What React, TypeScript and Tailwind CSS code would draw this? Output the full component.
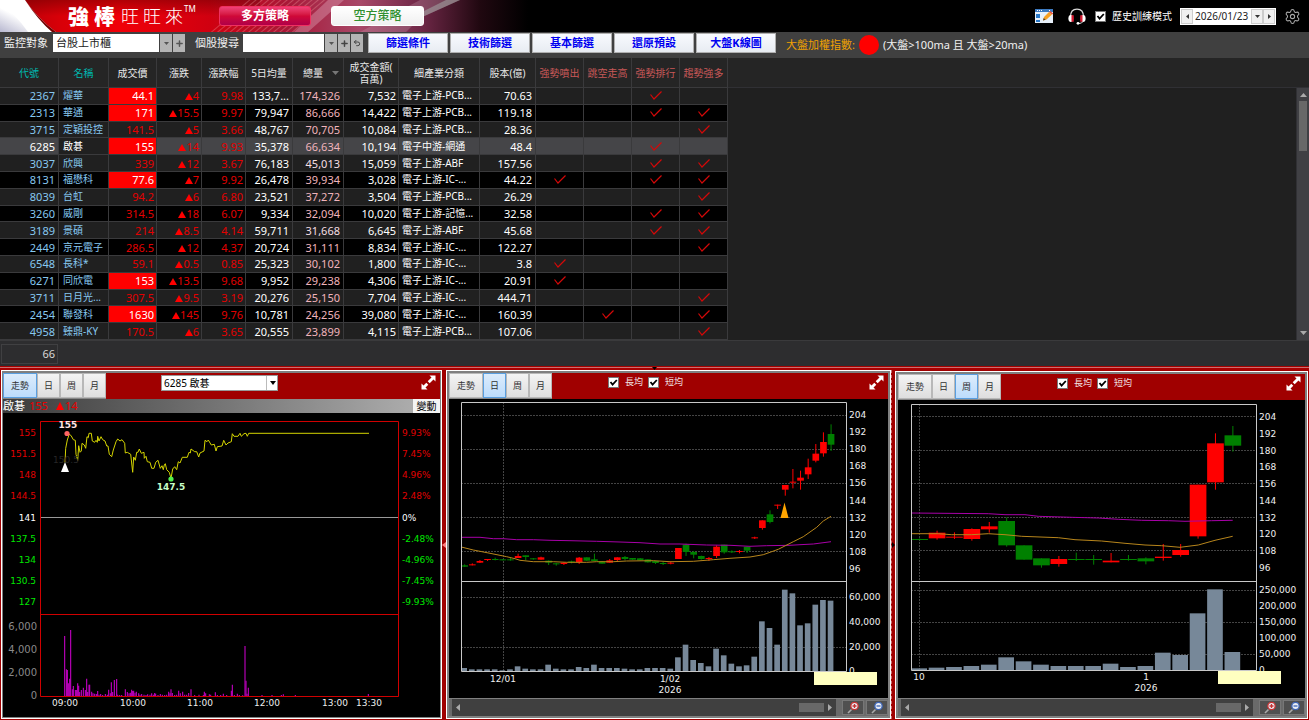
import React from "react";
import { Plus, Settings, Undo2 } from "lucide-react";

type Row = {
  code: string;
  name: string;
  price: string;
  limit?: boolean;
  change: string;
  pct: string;
  avg: string;
  vol: string;
  amount: string;
  sector: string;
  capital: string;
  marks: number[];
};

const row = (
  code: string, name: string, price: string, limit: boolean, change: string, pct: string,
  avg: string, vol: string, amount: string, sector: string, capital: string, marks: number[],
): Row => ({ code, name, price, limit, change, pct, avg, vol, amount, sector, capital, marks });

const rows: Row[] = [
  row("2367", "燿華", "44.1", true, "4", "9.98", "133,7...", "174,326", "7,532", "電子上游-PCB...", "70.63", [2]),
  row("2313", "華通", "171", true, "15.5", "9.97", "79,947", "86,666", "14,422", "電子上游-PCB...", "119.18", [2, 3]),
  row("3715", "定穎投控", "141.5", false, "5", "3.66", "48,767", "70,705", "10,084", "電子上游-PCB...", "28.36", [3]),
  row("6285", "啟碁", "155", true, "14", "9.93", "35,378", "66,634", "10,194", "電子中游-網通", "48.4", [2]),
  row("3037", "欣興", "339", false, "12", "3.67", "76,183", "45,013", "15,059", "電子上游-ABF", "157.56", [2, 3]),
  row("8131", "福懋科", "77.6", true, "7", "9.92", "26,478", "39,934", "3,028", "電子上游-IC-...", "44.22", [0, 2, 3]),
  row("8039", "台虹", "94.2", false, "6", "6.80", "23,521", "37,272", "3,504", "電子上游-PCB...", "26.29", [3]),
  row("3260", "威剛", "314.5", false, "18", "6.07", "9,334", "32,094", "10,020", "電子上游-記憶...", "32.58", [2, 3]),
  row("3189", "景碩", "214", false, "8.5", "4.14", "59,711", "31,668", "6,645", "電子上游-ABF", "45.68", [2, 3]),
  row("2449", "京元電子", "286.5", false, "12", "4.37", "20,724", "31,111", "8,834", "電子上游-IC-...", "122.27", [3]),
  row("6548", "長科*", "59.1", false, "0.5", "0.85", "25,323", "30,102", "1,800", "電子上游-IC-...", "3.8", [0]),
  row("6271", "同欣電", "153", true, "13.5", "9.68", "9,952", "29,238", "4,306", "電子上游-IC-...", "20.91", [0]),
  row("3711", "日月光...", "307.5", false, "9.5", "3.19", "20,276", "25,150", "7,704", "電子上游-IC-...", "444.71", [3]),
  row("2454", "聯發科", "1630", true, "145", "9.76", "10,781", "24,256", "39,080", "電子上游-IC-...", "160.39", [1, 3]),
  row("4958", "臻鼎-KY", "170.5", false, "6", "3.65", "20,555", "23,899", "4,115", "電子上游-PCB...", "107.06", [3]),
];

type Pt = [number, number];

/* Drawing data is kept at three units per pixel. */
const toPoints = (pts: Pt[], ox: number, oy: number) =>
  pts.map(([x, y]) => `${(ox + x / 3).toFixed(1)},${(oy + y / 3).toFixed(1)}`).join(" ");

const intraday: Pt[] = [
  [195, 292], [197, 250], [202, 225], [208, 207], [214, 213], [220, 224], [226, 226], [228, 268], [233, 286], [236, 242],
  [240, 262], [244, 258], [246, 235], [253, 240], [257, 250], [261, 215], [265, 218], [267, 205], [274, 205], [277, 228],
  [284, 232], [288, 226], [292, 232], [293, 214], [297, 228], [303, 215], [308, 224], [315, 228], [320, 243], [324, 243],
  [328, 268], [335, 275], [340, 255], [348, 230], [353, 222], [360, 228], [366, 224], [374, 235], [376, 264], [382, 262],
  [392, 268], [398, 322], [401, 276], [406, 286], [410, 262], [414, 262], [418, 252], [424, 265], [432, 262], [433, 280],
  [438, 274], [442, 290], [450, 292], [455, 310], [462, 310], [467, 292], [474, 286], [481, 310], [486, 302], [490, 314],
  [493, 300], [496, 296], [500, 314], [508, 322], [513, 340], [518, 312], [524, 305], [530, 314], [535, 290], [540, 294],
  [547, 277], [562, 277], [567, 262], [571, 264], [573, 252], [584, 260], [590, 260], [596, 276], [600, 264], [612, 258],
  [615, 226], [621, 230], [625, 225], [634, 240], [643, 238], [648, 258], [652, 245], [666, 243], [671, 226], [678, 240],
  [684, 234], [694, 230], [697, 206], [702, 214], [714, 214], [720, 205], [724, 214], [732, 206], [738, 205], [742, 214],
  [746, 205], [1107, 205],
];

const intradayVolume: Pt[] = [
  [194, 288], [199, 388], [202, 390], [205, 430], [209, 416], [212, 270], [217, 448], [220, 438], [226, 450], [229, 450],
  [233, 430], [236, 437], [239, 456], [244, 450], [250, 443], [256, 450], [260, 416], [263, 456], [267, 434], [269, 434],
  [275, 455], [279, 460], [284, 461], [289, 462], [293, 453], [297, 464], [302, 462], [308, 465], [316, 462], [322, 464],
  [326, 449], [331, 460], [334, 427], [338, 456], [343, 420], [350, 417], [353, 464], [359, 465], [365, 465], [376, 448],
  [382, 456], [387, 460], [391, 458], [395, 449], [398, 453], [401, 452], [405, 458], [409, 455], [416, 460], [420, 464],
  [425, 462], [432, 464], [438, 465], [443, 463], [450, 464], [455, 460], [460, 464], [464, 459], [467, 461], [474, 465],
  [481, 462], [487, 464], [494, 465], [500, 464], [506, 455], [510, 460], [513, 448], [517, 459], [524, 465], [530, 464],
  [536, 452], [541, 460], [548, 455], [554, 464], [560, 464], [566, 459], [573, 448], [584, 465], [597, 464], [610, 465],
  [613, 455], [617, 460], [628, 463], [632, 464], [646, 457], [652, 465], [662, 465], [670, 461], [680, 465], [694, 452],
  [697, 434], [703, 465], [712, 461], [718, 465], [728, 466], [735, 318], [738, 422], [741, 461], [745, 443], [786, 465],
  [816, 465], [844, 465], [850, 463], [886, 465], [1105, 462],
];

/* up flag, body top, body bottom, wick top, wick bottom */
type Candle = [0 | 1, number, number, number, number];

const daily: Candle[] = [
  [0, 601, 605, 598, 606], [1, 598, 601, 595, 601], [1, 588, 593, 585, 594], [1, 582, 585, 582, 588], [0, 582, 585, 578, 586],
  [0, 583, 585, 582, 586], [0, 583, 585, 578, 587], [1, 573, 579, 566, 579], [0, 571, 576, 571, 586], [0, 580, 583, 579, 584],
  [1, 577, 584, 575, 584], [0, 587, 593, 586, 600], [0, 595, 598, 594, 602], [1, 593, 597, 592, 600], [0, 589, 592, 587, 595],
  [1, 578, 592, 576, 597], [0, 577, 587, 577, 588], [0, 583, 588, 566, 588], [0, 590, 596, 588, 596], [1, 586, 593, 582, 593],
  [1, 577, 585, 577, 590], [0, 576, 582, 573, 586], [0, 579, 584, 579, 585], [0, 580, 586, 579, 586], [0, 583, 592, 583, 593],
  [0, 588, 594, 588, 597], [0, 594, 597, 590, 600], [1, 593, 596, 590, 598], [1, 549, 582, 549, 582], [0, 539, 561, 536, 573],
  [0, 561, 569, 558, 580], [0, 573, 582, 572, 584], [1, 579, 582, 576, 588], [1, 545, 573, 541, 579], [0, 539, 562, 539, 566],
  [0, 559, 562, 556, 564], [1, 558, 561, 555, 565], [0, 545, 557, 545, 564], [1, 517, 519, 515, 522], [1, 466, 489, 466, 494],
  [0, 448, 471, 436, 475], [1, 419, 422, 419, 432], [1, 360, 374, 360, 392], [1, 350, 352, 312, 370], [1, 338, 347, 317, 374],
  [1, 307, 328, 281, 342], [1, 266, 287, 237, 292], [1, 231, 265, 202, 275], [0, 207, 239, 178, 258],
];

const dailyVolume = [
  324, 328, 328, 328, 328, 331, 328, 319, 326, 328, 328, 314, 326, 328, 328, 321, 324, 314, 324, 324, 324, 326, 328, 328, 324,
  324, 324, 326, 292, 254, 300, 309, 319, 266, 286, 311, 319, 316, 290, 184, 204, 254, 89, 100, 196, 190, 134, 120, 122,
];

const dailyLong: Pt[] = [
  [64, 517], [120, 517], [160, 521], [190, 521], [230, 524], [280, 524], [330, 526], [390, 527], [470, 529], [540, 531],
  [600, 533], [660, 537], [720, 537], [800, 540], [870, 541], [930, 544], [980, 542], [1050, 541], [1080, 539], [1120, 537], [1173, 530],
];
const dailyShort: Pt[] = [
  [64, 546], [100, 555], [150, 565], [200, 575], [225, 581], [240, 586], [280, 590], [340, 590], [380, 592], [440, 592],
  [470, 590], [520, 590], [560, 588], [640, 587], [690, 590], [760, 589], [820, 584], [870, 580], [930, 576], [970, 569],
  [1015, 553], [1060, 530], [1090, 515], [1130, 487], [1150, 468], [1173, 454],
];

const weekly: Candle[] = [
  [0, 522, 524, 520, 526], [1, 503, 520, 497, 524], [1, 515, 518, 502, 522], [1, 492, 522, 490, 527], [1, 484, 493, 471, 503],
  [0, 468, 541, 457, 545], [0, 541, 584, 541, 584], [0, 580, 601, 580, 608], [1, 582, 597, 573, 605], [0, 582, 584, 563, 588],
  [0, 582, 585, 570, 599], [1, 587, 592, 564, 592], [0, 582, 585, 570, 587], [0, 580, 589, 577, 598], [1, 575, 579, 537, 587],
  [1, 555, 570, 537, 575], [1, 359, 514, 359, 521], [1, 235, 352, 205, 374], [0, 211, 242, 183, 260],
];
const weeklyVolume = [325, 323, 321, 318, 314, 292, 304, 314, 318, 318, 318, 311, 321, 318, 278, 285, 160, 88, 276];
const weeklyLong: Pt[] = [
  [78, 444], [310, 446], [360, 449], [420, 449], [460, 454], [560, 457], [640, 459], [700, 463], [770, 466], [850, 467],
  [900, 469], [980, 467], [1043, 466],
];
const weeklyShort: Pt[] = [
  [78, 506], [160, 506], [200, 509], [260, 509], [310, 506], [360, 509], [410, 514], [520, 518], [570, 524], [650, 528],
  [720, 535], [780, 540], [830, 542], [885, 547], [940, 540], [990, 526], [1043, 514],
];

const CheckMark = () => (
  <svg width="12" height="9" viewBox="0 0 12 9" className="mx-auto block" role="img" aria-label="符合">
    <path d="M.5 3.5 4 8 11.5.5" fill="none" stroke="#d40808" strokeWidth="1.2" />
  </svg>
);

const headClass = "border-r border-b border-[#3a3a3c] bg-[#252525] p-0 text-center text-[10px] leading-3 font-normal";
const cellClass = "border-r border-b border-[#3a3a3c] p-0 whitespace-nowrap leading-[15px]";

const columns: [string, string, string][] = [
  ["代號", "w-[59px]", "text-[#00b8b0]"],
  ["名稱", "w-[50px]", "text-[#00b8b0]"],
  ["成交價", "w-12", "text-[#e8e8e8]"],
  ["漲跌", "w-[45px]", "text-[#e8e8e8]"],
  ["漲跌幅", "w-11", "text-[#e8e8e8]"],
  ["5日均量", "w-[47px]", "text-[#e8e8e8]"],
  ["總量", "w-[51px]", "text-[#e8e8e8]"],
  ["成交金額(百萬)", "w-[55px]", "text-[#e8e8e8]"],
  ["細產業分類", "w-[81px]", "text-[#e8e8e8]"],
  ["股本(億)", "w-14", "text-[#e8e8e8]"],
  ["強勢噴出", "w-12", "text-[#c85858]"],
  ["跳空走高", "w-12", "text-[#c85858]"],
  ["強勢排行", "w-12", "text-[#c85858]"],
  ["趨勢強多", "w-12", "text-[#c85858]"],
];

function StockTable() {
  return (
    <table className="h-[282px] w-[728px] shrink-0 table-fixed border-separate border-spacing-0 text-[11px]">
      <thead>
        <tr className="h-[30px]">
          {columns.map(([label, width, color]) => (
            <th key={label} scope="col" className={`${headClass} ${width} ${color}`}>
              {label === "總量" ? (
                <span className="flex items-center justify-between pr-1 pl-2.5">
                  總量
                  <svg width="7" height="4" viewBox="0 0 7 4"><path d="M0 0h7L3.5 4z" fill="#777" /></svg>
                </span>
              ) : label === "成交金額(百萬)" ? (
                <>
                  <span className="block">成交金額(</span>
                  <span className="block">百萬)</span>
                </>
              ) : (
                label
              )}
            </th>
          ))}
        </tr>
      </thead>
      <tbody>
        {rows.map((r, i) => {
          const selected = i === 3;
          const bg = selected ? "bg-[#454548]" : i % 2 ? "bg-black" : "bg-[#202020]";
          return (
            <tr key={r.code} className={bg}>
              <td className={`${cellClass} pr-[3px] text-right ${selected ? "text-white" : "text-[#87c8f0]"}`}>{r.code}</td>
              <td className={`${cellClass} pl-1 text-[10px] ${selected ? "bg-[#202020] text-white" : "text-[#87c8f0]"}`}>{r.name}</td>
              <td className={`${cellClass} pr-[2px] text-right ${r.limit ? "bg-[#ff0000] text-white" : "text-[#e40000]"}`}>{r.price}</td>
              <td className={`${cellClass} pr-[2px] text-right text-[#e40000]`}>
                <svg width="8" height="7" viewBox="0 0 8 7" className="inline-block align-[0px]"><path d="M4 0 8 7H0z" fill="#f00" /></svg>
                {r.change}
              </td>
              <td className={`${cellClass} pr-[2px] text-right text-[#e40000]`}>{r.pct}</td>
              <td className={`${cellClass} pr-[3px] text-right text-white`}>{r.avg}</td>
              <td className={`${cellClass} pr-[3px] text-right ${i === 4 || i === 8 ? "text-[#f5dfe3]" : "text-[#f0b4bc]"}`}>{r.vol}</td>
              <td className={`${cellClass} pr-[2px] text-right text-white`}>{r.amount}</td>
              <td className={`${cellClass} pl-[3px] text-[10px] text-white`}>{r.sector}</td>
              <td className={`${cellClass} pr-[3px] text-right text-white`}>{r.capital}</td>
              {[0, 1, 2, 3].map((m) => (
                <td key={m} className={cellClass}>{r.marks.includes(m) && <CheckMark />}</td>
              ))}
            </tr>
          );
        })}
      </tbody>
    </table>
  );
}

function Check({ label, className }: { label: string; className: string }) {
  return (
    <label className={`flex items-center gap-1.5 whitespace-nowrap ${className}`}>
      <span className="relative block size-[11px]">
        <input type="checkbox" defaultChecked className="peer block size-[11px] appearance-none border border-[#777] bg-white" />
        <svg viewBox="0 0 11 11" className="pointer-events-none absolute inset-0 hidden size-[11px] peer-checked:block">
          <path d="M2.5 5 4.6 7.6 8.8 3" fill="none" stroke="#000" strokeWidth="1.8" />
        </svg>
      </span>
      {label}
    </label>
  );
}

function PanelBar({ active, children }: { active: string; children: React.ReactNode }) {
  return (
    <div className="flex h-[26px] shrink-0 items-start bg-[#a00000]">
      <div className="flex h-full border-b border-[#888]">
        {["走勢", "日", "周", "月"].map((t) => (
          <button
            key={t}
            type="button"
            className={`border text-[9px] text-[#333] ${t === "走勢" ? "w-[34px]" : "w-[23px]"} ${
              t === active ? "border-[#5a9fe0] bg-linear-to-b from-[#dcecfc] to-[#bcdcfc]" : "border-[#b8b8b8] bg-linear-to-b from-[#f4f4f4] to-[#dedede]"
            }`}
          >
            {t}
          </button>
        ))}
      </div>
      {children}
      <button type="button" aria-label="放大" className="mt-0.5 mr-1 ml-auto">
        <svg width="15" height="15" viewBox="0 0 15 15" className="block">
          <path d="M8.500.500h6v6l-2-2-3.800 3.800-2-2 3.800-3.800zM6.500 14.500h-6v-6l2 2 2.800-2.800 2 2-2.800 2.800z" fill="#fff" />
        </svg>
      </button>
    </div>
  );
}

const chartFont = "font-['DejaVu_Sans',sans-serif] text-[9px]";

function IntradayChart() {
  const prices = ["155", "151.5", "148", "144.5", "141", "137.5", "134", "130.5", "127"];
  const pcts = ["9.93%", "7.45%", "4.96%", "2.48%", "0%", "-2.48%", "-4.96%", "-7.45%", "-9.93%"];
  const tone = (i: number) => (i < 4 ? "#e00000" : i === 4 ? "#fff" : "#00e800");
  return (
    <svg viewBox="3 413 437 304" className={`block min-h-0 w-full flex-1 bg-black ${chartFont}`}>
      {prices.map((p, i) => (
        <g key={p} fill={tone(i)}>
          <text x="36" y={436 + Math.round(i * 21.15)} textAnchor="end">{p}</text>
          <text x="402" y={436 + Math.round(i * 21.15)}>{pcts[i]}</text>
        </g>
      ))}
      {["6,000", "4,000", "2,000", "0"].map((v, i) => (
        <text key={v} x="37" y={630 + i * 23} textAnchor="end" fill="#8a8a8a" className="text-[10px]">{v}</text>
      ))}
      {([["09:00", 65], ["10:00", 133], ["11:00", 200], ["12:00", 267], ["13:00", 335], ["13:30", 369]] as [string, number][]).map(([t, x]) => (
        <text key={t} x={x} y="706" textAnchor="middle" fill="#eee">{t}</text>
      ))}
      {intradayVolume.map(([x, y], i) => (
        <line key={i} x1={x / 3} x2={x / 3} y1={540 + y / 3} y2="696" stroke="#c400c4" strokeWidth="1.1" />
      ))}
      <path d="M40 517.5h359" stroke="#999" />
      <path d="M40.5 696.5v-275H398.5V696.5ZM40.5 614.5H398.5" fill="none" stroke="#d00000" />
      <polyline points={toPoints(intraday, 0, 365)} fill="none" stroke="#d4d400" />
      <text x="66" y="463" textAnchor="middle" fill="#262626">150.5</text>
      <circle cx="67" cy="433.5" r="2.6" fill="#ff6464" />
      <circle cx="171" cy="479" r="2.6" fill="#50f050" />
      <path d="m65 462 4 10h-8z" fill="#fff" />
      <text x="68" y="428" textAnchor="middle" fill="#ffe4e4" className="font-bold">155</text>
      <text x="171" y="490" textAnchor="middle" fill="#c8ffc8" className="font-bold">147.5</text>
    </svg>
  );
}

type CandleChartProps = {
  viewBox: string;
  ox: number;
  left: number;
  right: number;
  top: number;
  bottom: number;
  first: number;
  step: number;
  body: number;
  candles: Candle[];
  volumes: number[];
  long: Pt[];
  short: Pt[];
  gridY: number[];
  gridX: number;
  labelY: number;
  labelStep: number;
  volLabels: [string, number][];
  dates: [string, number, number][];
  note: [number, number];
  arrow?: boolean;
};

function CandleChart(p: CandleChartProps) {
  const cx = (i: number) => p.ox + (p.first + i * p.step) / 3;
  const w = p.body / 3;
  return (
    <svg viewBox={p.viewBox} className={`block min-h-0 w-full flex-1 bg-black ${chartFont}`} fill="#f0f0f0">
      {p.gridY.map((y) => (
        <path key={y} d={`M${p.left} ${y}.5H${p.right}`} stroke="#444" strokeDasharray="2 1" />
      ))}
      <path d={`M${p.gridX}.5 ${p.top}V${p.bottom}`} stroke="#444" strokeDasharray="2 1" />
      {p.volumes.map((v, i) => (
        <rect key={i} x={cx(i) - w / 2} y={560 + v / 3} width={w - 1} height={Math.max(p.bottom - 560 - v / 3, 1)} fill="#778899" />
      ))}
      {p.candles.map(([up, t, b, wt, wb], i) => (
        <g key={i} fill={up ? "#ff0000" : "#008000"}>
          <rect x={cx(i) - 0.5} y={365 + wt / 3} width="1" height={(wb - wt) / 3} />
          <rect x={cx(i) - w / 2} y={365 + t / 3} width={w} height={Math.max((b - t) / 3, 1)} />
        </g>
      ))}
      <polyline points={toPoints(p.long, p.ox, 365)} fill="none" stroke="#a800a8" />
      <polyline points={toPoints(p.short, p.ox, 365)} fill="none" stroke="#b8861c" />
      {p.arrow && <path d="m784.5 502.5 4 15.5h-8z" fill="#ffa500" />}
      <path
        d={`M${p.left}.5 ${p.top}.5H${p.right}.5V${p.bottom}.5H${p.left}.5ZM${p.left} 581.5H${p.right}`}
        fill="none"
        stroke="#c8c8c8"
      />
      {[204, 192, 180, 168, 156, 144, 132, 120, 108, 96].map((v, i) => (
        <text key={v} x={p.right + 3} y={Math.round(p.labelY + i * p.labelStep)}>{v}</text>
      ))}
      {p.volLabels.map(([v, y]) => (
        <text key={v} x={p.right + 3} y={y}>{v}</text>
      ))}
      {p.dates.map(([d, x, y]) => (
        <text key={d} x={x} y={y} textAnchor="middle">{d}</text>
      ))}
      <rect x={p.note[0]} y={p.note[1]} width="63" height="13" fill="#ffffc0" />
    </svg>
  );
}

function ZoomIcon({ color, plus }: { color: string; plus: boolean }) {
  return (
    <svg width="13" height="13" viewBox="0 0 13 13" className="mx-auto block">
      <path d="M1 12 4.5 8.500" stroke="#aaa" strokeWidth="1.6" />
      <circle cx="7.5" cy="5" r="3.7" fill="#e8ecf4" stroke={color} strokeWidth="1.3" />
      <path d={plus ? "M5.5 5h4M7.5 3v4" : "M5.5 5h4"} stroke={color} strokeWidth="1.3" />
    </svg>
  );
}

function ChartScroll() {
  return (
    <div className="flex h-[18px] shrink-0 items-stretch border-t border-[#808080] bg-[#6a6a6a] pl-[3px]">
      <div className="flex min-w-0 flex-1 items-center bg-[#404040] px-1">
        <svg width="4" height="7" viewBox="0 0 4 7"><path d="M4 0v7L0 3.5z" fill="#aaa" /></svg>
        <div className="mr-1 ml-auto h-[9px] w-[25px] bg-[#686868]" />
        <svg width="4" height="7" viewBox="0 0 4 7"><path d="M0 0v7l4-3.5z" fill="#aaa" /></svg>
      </div>
      <div className="ml-1.5 flex gap-0.5 py-px">
        <button type="button" aria-label="放大圖表" className="w-[22px] border border-[#777] bg-[#505050]"><ZoomIcon color="#c83232" plus /></button>
        <button type="button" aria-label="縮小圖表" className="w-[22px] border border-[#777] bg-[#505050]"><ZoomIcon color="#3c64b4" plus={false} /></button>
      </div>
    </div>
  );
}

function ChartChecks() {
  return (
    <div className="mt-[3px] ml-14 flex gap-[5px] text-[9px] leading-3 text-[#f0e0e0]">
      <Check label="長均" className="" />
      <Check label="短均" className="" />
    </div>
  );
}

function Banner() {
  return (
    <svg viewBox="0 0 600 32" preserveAspectRatio="xMinYMin slice" className="absolute inset-y-0 left-0 h-8 w-[600px]" aria-hidden="true">
      <defs>
        <linearGradient id="base" x1="0" x2="1">
          <stop offset="0" stopColor="#b00008" />
          <stop offset=".1" stopColor="#d80008" />
          <stop offset=".2" stopColor="#f00008" />
          <stop offset=".35" stopColor="#d00010" />
          <stop offset=".48" stopColor="#a81838" />
          <stop offset=".6" stopColor="#a84868" />
          <stop offset=".7" stopColor="#702848" />
          <stop offset=".8" stopColor="#200810" />
          <stop offset=".88" stopColor="#000" />
        </linearGradient>
        <linearGradient id="swoosh" x1="0" y1="1" x2=".5" y2="0">
          <stop offset="0" stopColor="#b8b8d0" />
          <stop offset=".7" stopColor="#fff" />
        </linearGradient>
        <linearGradient id="shade" x1="0" y1="0" x2="0" y2="1">
          <stop offset="0" stopColor="#500000" stopOpacity=".4" />
          <stop offset=".5" stopColor="#500000" stopOpacity="0" />
        </linearGradient>
        <pattern id="stripes" width="4" height="4" patternUnits="userSpaceOnUse" patternTransform="rotate(50)">
          <path d="M0 0v4" stroke="#f0a0a0" strokeOpacity=".5" strokeWidth="1.4" />
        </pattern>
      </defs>
      <path d="M0 0h600v32H0z" fill="url(#base)" />
      <path d="M0 0h260v32H0z" fill="url(#shade)" />
      <path d="M210 32 246 0h82l-34 32z" fill="url(#stripes)" />
      <path d="M294 32 328 0h16l-36 32z" fill="#e0a8bc" opacity=".4" />
      <path d="M360 32 420 0h40l-40 18-14 14z" fill="#c89cac" opacity=".3" />
      <path d="m420 13 26-13h14l-40 18z" fill="#a0a0a0" opacity=".6" />
      <path d="M0 0h25q12 18 31 32H0z" fill="#fff" />
      <path d="M0 4q14 8 28 28H0z" fill="url(#swoosh)" />
      <path d="M25 0q12 18 31 32h-4Q38 20 25 0z" fill="#700000" />
    </svg>
  );
}

function TopBar() {
  return (
    <header className="relative flex h-8 shrink-0 items-center overflow-hidden bg-black">
      <Banner />
      <h1 className="relative ml-[68px] flex w-[151px] items-center whitespace-nowrap text-white">
        <span className="flex gap-[5px] text-[21px] leading-7 font-black"><span>強</span><span>棒</span></span>
        <span className="ml-[6px] flex gap-1 text-[18px] leading-7 font-light"><span>旺</span><span>旺</span><span>來</span></span>
        <span className="mb-3.5 ml-px text-[8px] leading-[10px]">TM</span>
      </h1>
      <button type="button" className="relative h-5 w-[92px] rounded-[3px] border border-[#f03060] bg-linear-to-b from-[#f04078] via-[#d00838] to-[#b00048] text-[12px] leading-[18px] font-bold text-white">
        多方策略
      </button>
      <button type="button" className="relative ml-5 h-5 w-[93px] rounded-[3px] border border-white bg-linear-to-b from-white to-[#f0f0f0] text-[12px] leading-[18px] font-medium text-[#309030]">
        空方策略
      </button>
      <div className="ml-auto flex items-center text-white">
        <button type="button" aria-label="編輯版面">
          <svg width="18" height="16" viewBox="0 0 18 16" className="block">
            <path d="M0 1h18v14H0z" fill="#e8f0fa" />
            <path d="M0 1h18v3H0z" fill="#3c7ac0" />
            <path d="M2 2.5h6M14 2.5h2" stroke="#fff" strokeDasharray="1 1" />
            <path d="M1 6h4v4H1zM1 12h4v2H1z" fill="#2878c8" />
            <path d="m8 12.5 1-3.500L14 4l3 2.500-5.500 5z" fill="#f8a020" />
            <path d="m14 4 1.2-1 3 2.500L17 6.500z" fill="#e85040" />
            <path d="m8 12.500.7-2.500 2 1.800z" fill="#543" />
          </svg>
        </button>
        <button type="button" aria-label="客服" className="ml-[15px]">
          <svg width="18" height="17" viewBox="0 0 18 17" className="block">
            <path d="M2.5 9C2.5 4 5 1.200 9 1.200S15.500 4 15.500 9" fill="none" stroke="#d8d8d8" strokeWidth="1.3" />
            <ellipse cx="2.8" cy="10.5" rx="2.400" ry="3.400" fill="#fff" />
            <ellipse cx="15.2" cy="10.5" rx="2.400" ry="3.400" fill="#fff" />
            <path d="M3.500 7.200h2.300v6.500H3.500zM12.200 7.200h2.300v6.500h-2.300z" fill="#d81830" />
            <path d="M15 13.500q-1 2-4 2" fill="none" stroke="#ddd" />
            <circle cx="10" cy="15.300" r="1.400" fill="#fff" />
          </svg>
        </button>
        <Check label="歷史訓練模式" className="ml-[9px] text-[10px]" />
        <div className="ml-2 flex h-[17px] items-center bg-white p-px text-[10px] text-[#222]">
          <button type="button" aria-label="前一日" className="flex h-[15px] w-3 items-center justify-center border border-[#ccc] bg-[#f0f0f0]">
            <svg width="3" height="5" viewBox="0 0 3 5"><path d="M3 0v5L0 2.5z" fill="#333" /></svg>
          </button>
          <input aria-label="日期" defaultValue="2026/01/23" className="h-[15px] w-[58px] bg-white px-0.5 outline-none" />
          <button type="button" aria-label="選擇日期" className="flex h-[15px] w-3 items-center justify-center border border-[#ccc] bg-[#f0f0f0]">
            <svg width="5" height="3" viewBox="0 0 5 3"><path d="M0 0h5L2.500 3z" fill="#333" /></svg>
          </button>
          <button type="button" aria-label="後一日" className="flex h-[15px] w-3 items-center justify-center border border-[#ccc] bg-[#f0f0f0]">
            <svg width="3" height="5" viewBox="0 0 3 5"><path d="M0 0v5l3-2.5z" fill="#333" /></svg>
          </button>
        </div>
        <button type="button" aria-label="設定" className="mr-2 ml-2"><Settings size={17} strokeWidth={1.5} color="#a8a8a8" /></button>
      </div>
    </header>
  );
}

const miniButton = "flex h-[18px] w-3 items-center justify-center bg-[#b4b4b4]";
const Caret = () => <svg width="5" height="3" viewBox="0 0 5 3"><path d="M0 0h5L2.5 3z" fill="#555" /></svg>;

function ToolBar() {
  return (
    <div className="flex h-[26px] shrink-0 items-start bg-[#404040] pt-px pl-1 text-[11px] leading-5 whitespace-nowrap text-[#f0f0f0]">
      <label htmlFor="watch">監控對象</label>
      <div className="mt-px ml-[5px] flex gap-px">
        <select id="watch" className="h-[18px] w-[106px] appearance-none bg-white pl-[3px] text-[11px] leading-[18px] text-[#222]">
          <option>台股上市櫃</option>
        </select>
        <button type="button" aria-label="展開" className={miniButton}><Caret /></button>
        <button type="button" aria-label="新增清單" className={miniButton}><Plus size={9} strokeWidth={4} color="#555" /></button>
      </div>
      <label htmlFor="search" className="ml-[10px]">個股搜尋</label>
      <div className="mt-px ml-1 flex gap-px">
        <input id="search" className="h-[18px] w-[81px] bg-white px-1 text-[#222] outline-none" />
        <button type="button" aria-label="展開搜尋" className={miniButton}><Caret /></button>
        <button type="button" aria-label="加入" className={miniButton}><Plus size={9} strokeWidth={4} color="#444" /></button>
        <button type="button" aria-label="復原" className={miniButton}><Undo2 size={8} strokeWidth={3} color="#444" /></button>
      </div>
      <div className="ml-[5px] flex gap-0.5">
        {["篩選條件", "技術篩選", "基本篩選", "還原預設", "大盤K線圖"].map((b) => (
          <button key={b} type="button" className="h-5 w-20 border border-[#b0b0b0] bg-linear-to-b from-[#f8fafe] to-[#e8ecf2] text-[11px] leading-[18px] font-bold text-[#0000f0]">
            {b}
          </button>
        ))}
      </div>
      <p className="ml-[10px] flex items-center pt-0.5">
        <span className="text-[#f0a000]">大盤加權指數:</span>
        <span className="mx-[4px] size-5 rounded-full bg-[#ff0000]" />
        <span>(大盤&gt;100ma 且 大盤&gt;20ma)</span>
      </p>
    </div>
  );
}

const panelClass = "flex min-w-0 flex-col border border-white bg-[#808080] pt-0.5";

export default function App() {
  return (
    <div className="flex h-screen min-h-[600px] flex-col overflow-hidden bg-[#2d2d2f] font-['Noto_Sans','Noto_Sans_CJK_TC',sans-serif]">
      <TopBar />
      <ToolBar />
      <main className="flex min-h-0 flex-1 flex-col">
        <section aria-label="選股清單" className="flex shrink-0 bg-[#202020]">
          <StockTable />
          <div className="flex flex-1 flex-col">
            <div className="h-[30px] border-b border-[#303034] bg-[#252525]" />
            <div className="flex flex-1 flex-col items-center gap-1 self-end border-l border-[#303034] bg-[#404044] px-[2px] py-[5px]">
              <svg width="7" height="4" viewBox="0 0 7 4"><path d="M0 4h7L3.5 0z" fill="#aaa" /></svg>
              <div className="h-[50px] w-2 bg-[#686868]" />
              <svg width="7" height="4" viewBox="0 0 7 4" className="mt-auto"><path d="M0 0h7L3.5 4z" fill="#aaa" /></svg>
            </div>
          </div>
        </section>
        <div className="flex h-[26px] shrink-0 items-center border-t border-[#3a3a3c] bg-[#2d2d2f] pl-px">
          <output className="h-5 w-[57px] border border-[#404042] pr-[2px] text-right text-[11px] leading-[18px] text-[#d8d8d8]">66</output>
        </div>
        <div className="flex h-1 shrink-0 flex-col items-center bg-[#a80000]">
          <div className="mt-px flex h-px w-full justify-center bg-[#c87070]">
            <svg width="5" height="3" viewBox="0 0 5 3" className="shrink-0"><path d="M0 0h5L2.5 3z" fill="#000" /></svg>
          </div>
        </div>
        <section aria-label="走勢圖" className="flex min-h-0 flex-1 bg-[#a00000] px-px pb-px">
          <article className={`${panelClass} flex-[437_1_0%] px-px pb-px`}>
            <PanelBar active="走勢">
              <select aria-label="個股" className="mt-0.5 ml-[55px] h-4 w-[117px] appearance-none border border-[#999] bg-white pl-0.5 text-[10px] leading-[14px] text-black">
                <option>6285 啟碁</option>
              </select>
              <span className="pointer-events-none mt-[3px] -ml-3 flex h-[14px] w-3 items-center justify-center border-l border-[#bbb]">
                <svg width="6" height="4" viewBox="0 0 6 4"><path d="M0 0h6L3 4z" fill="#000" /></svg>
              </span>
            </PanelBar>
            <div className="flex h-[14px] shrink-0 items-center bg-linear-to-r from-[#3c3c3c] to-[#b4b4b4] text-[11px] leading-[14px] text-[#e80000]">
              <span className="text-white">啟碁</span>
              <span className="ml-1">155</span>
              <svg width="8" height="8" viewBox="0 0 8 8" className="ml-2"><path d="M4 0 8 8H0z" fill="#f00" /></svg>
              <span className="ml-px">14</span>
              <button type="button" className="ml-auto h-[14px] w-[27px] bg-[#f4f4f4] text-[10px] leading-[14px] text-black">變動</button>
            </div>
            <IntradayChart />
          </article>
          <div className="flex w-1 shrink-0 items-center"><svg width="4" height="6" viewBox="0 0 4 6"><path d="M4 0v6L0 3z" fill="#ff8080" /></svg></div>
          <article className={`${panelClass} flex-[439_1_0%] px-0.5 pb-0.5`}>
            <PanelBar active="日"><ChartChecks /></PanelBar>
            <CandleChart
              viewBox="449 399 439 299"
              ox={440} left={461} right={846} top={402} bottom={671}
              first={74} step={22.9} body={20}
              candles={daily} volumes={dailyVolume} long={dailyLong} short={dailyShort}
              gridY={[415, 449, 483, 517, 551, 597, 647]} gridX={503}
              labelY={418} labelStep={17.1}
              volLabels={[["60,000", 600], ["40,000", 625], ["20,000", 650], ["0", 674]]}
              dates={[["12/01", 503, 682], ["1/02", 670, 682], ["2026", 670, 693]]}
              note={[814, 672]}
              arrow
            />
            <ChartScroll />
          </article>
          <div className="flex w-1 shrink-0 items-center border-l border-dashed border-[#c87070]"><svg width="3" height="6" viewBox="0 0 3 6"><path d="M0 0v6l3-3z" fill="#000" /></svg></div>
          <article className={`${panelClass} mt-px flex-[407_1_0%] px-0.5 pb-0.5`}>
            <PanelBar active="周"><ChartChecks /></PanelBar>
            <CandleChart
              viewBox="898 400 407 298"
              ox={885} left={911} right={1256} top={404} bottom={670}
              first={104} step={52.2} body={50}
              candles={weekly} volumes={weeklyVolume} long={weeklyLong} short={weeklyShort}
              gridY={[416, 450, 483, 517, 550, 590, 622, 654]} gridX={919}
              labelY={420} labelStep={16.75}
              volLabels={[["250,000", 593], ["200,000", 609], ["150,000", 625], ["100,000", 641], ["50,000", 657], ["0", 673]]}
              dates={[["10", 919, 680], ["1", 1146, 680], ["2026", 1146, 691]]}
              note={[1218, 671]}
            />
            <ChartScroll />
          </article>
        </section>
      </main>
    </div>
  );
}
